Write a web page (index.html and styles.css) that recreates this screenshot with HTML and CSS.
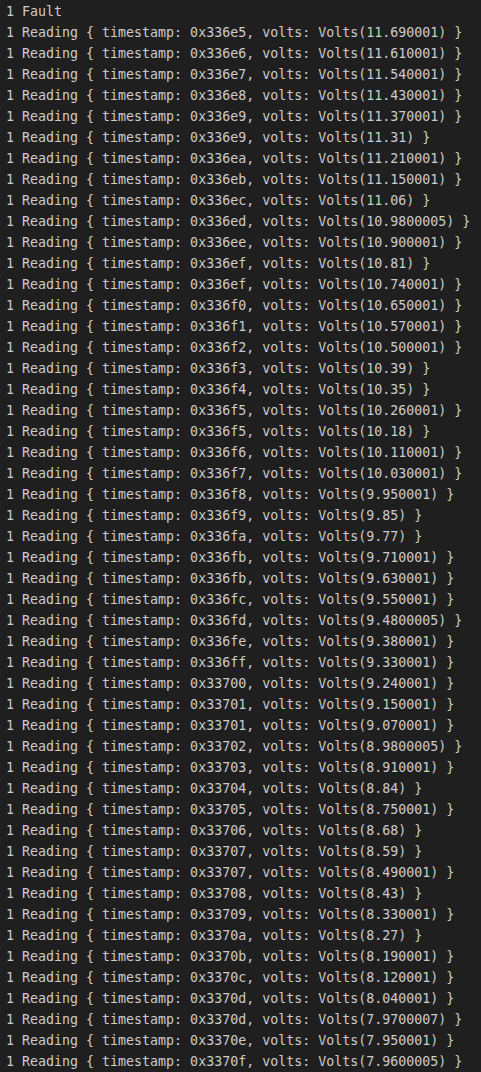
FILE: index.html
```html
<!DOCTYPE html>
<html>
<head>
<meta charset="utf-8">
<link rel="stylesheet" href="styles.css">
</head>
<body>
<div class="term">
<div class="line">1 Fault</div>
<div class="line">1 Reading { timestamp: 0x336e5, volts: Volts(11.690001) }</div>
<div class="line">1 Reading { timestamp: 0x336e6, volts: Volts(11.610001) }</div>
<div class="line">1 Reading { timestamp: 0x336e7, volts: Volts(11.540001) }</div>
<div class="line">1 Reading { timestamp: 0x336e8, volts: Volts(11.430001) }</div>
<div class="line">1 Reading { timestamp: 0x336e9, volts: Volts(11.370001) }</div>
<div class="line">1 Reading { timestamp: 0x336e9, volts: Volts(11.31) }</div>
<div class="line">1 Reading { timestamp: 0x336ea, volts: Volts(11.210001) }</div>
<div class="line">1 Reading { timestamp: 0x336eb, volts: Volts(11.150001) }</div>
<div class="line">1 Reading { timestamp: 0x336ec, volts: Volts(11.06) }</div>
<div class="line">1 Reading { timestamp: 0x336ed, volts: Volts(10.9800005) }</div>
<div class="line">1 Reading { timestamp: 0x336ee, volts: Volts(10.900001) }</div>
<div class="line">1 Reading { timestamp: 0x336ef, volts: Volts(10.81) }</div>
<div class="line">1 Reading { timestamp: 0x336ef, volts: Volts(10.740001) }</div>
<div class="line">1 Reading { timestamp: 0x336f0, volts: Volts(10.650001) }</div>
<div class="line">1 Reading { timestamp: 0x336f1, volts: Volts(10.570001) }</div>
<div class="line">1 Reading { timestamp: 0x336f2, volts: Volts(10.500001) }</div>
<div class="line">1 Reading { timestamp: 0x336f3, volts: Volts(10.39) }</div>
<div class="line">1 Reading { timestamp: 0x336f4, volts: Volts(10.35) }</div>
<div class="line">1 Reading { timestamp: 0x336f5, volts: Volts(10.260001) }</div>
<div class="line">1 Reading { timestamp: 0x336f5, volts: Volts(10.18) }</div>
<div class="line">1 Reading { timestamp: 0x336f6, volts: Volts(10.110001) }</div>
<div class="line">1 Reading { timestamp: 0x336f7, volts: Volts(10.030001) }</div>
<div class="line">1 Reading { timestamp: 0x336f8, volts: Volts(9.950001) }</div>
<div class="line">1 Reading { timestamp: 0x336f9, volts: Volts(9.85) }</div>
<div class="line">1 Reading { timestamp: 0x336fa, volts: Volts(9.77) }</div>
<div class="line">1 Reading { timestamp: 0x336fb, volts: Volts(9.710001) }</div>
<div class="line">1 Reading { timestamp: 0x336fb, volts: Volts(9.630001) }</div>
<div class="line">1 Reading { timestamp: 0x336fc, volts: Volts(9.550001) }</div>
<div class="line">1 Reading { timestamp: 0x336fd, volts: Volts(9.4800005) }</div>
<div class="line">1 Reading { timestamp: 0x336fe, volts: Volts(9.380001) }</div>
<div class="line">1 Reading { timestamp: 0x336ff, volts: Volts(9.330001) }</div>
<div class="line">1 Reading { timestamp: 0x33700, volts: Volts(9.240001) }</div>
<div class="line">1 Reading { timestamp: 0x33701, volts: Volts(9.150001) }</div>
<div class="line">1 Reading { timestamp: 0x33701, volts: Volts(9.070001) }</div>
<div class="line">1 Reading { timestamp: 0x33702, volts: Volts(8.9800005) }</div>
<div class="line">1 Reading { timestamp: 0x33703, volts: Volts(8.910001) }</div>
<div class="line">1 Reading { timestamp: 0x33704, volts: Volts(8.84) }</div>
<div class="line">1 Reading { timestamp: 0x33705, volts: Volts(8.750001) }</div>
<div class="line">1 Reading { timestamp: 0x33706, volts: Volts(8.68) }</div>
<div class="line">1 Reading { timestamp: 0x33707, volts: Volts(8.59) }</div>
<div class="line">1 Reading { timestamp: 0x33707, volts: Volts(8.490001) }</div>
<div class="line">1 Reading { timestamp: 0x33708, volts: Volts(8.43) }</div>
<div class="line">1 Reading { timestamp: 0x33709, volts: Volts(8.330001) }</div>
<div class="line">1 Reading { timestamp: 0x3370a, volts: Volts(8.27) }</div>
<div class="line">1 Reading { timestamp: 0x3370b, volts: Volts(8.190001) }</div>
<div class="line">1 Reading { timestamp: 0x3370c, volts: Volts(8.120001) }</div>
<div class="line">1 Reading { timestamp: 0x3370d, volts: Volts(8.040001) }</div>
<div class="line">1 Reading { timestamp: 0x3370d, volts: Volts(7.9700007) }</div>
<div class="line">1 Reading { timestamp: 0x3370e, volts: Volts(7.950001) }</div>
<div class="line">1 Reading { timestamp: 0x3370f, volts: Volts(7.9600005) }</div>
</div>
</body>
</html>
```

FILE: styles.css
```css
html, body {
  margin: 0;
  padding: 0;
  background: #1f1f1f;
}
.term {
  padding: 1px 0 0 6px;
  font-family: "DejaVu Sans Mono", "Liberation Mono", monospace;
  font-size: 13.3px;
  line-height: 21px;
  color: #cccccc;
}
.line {
  white-space: pre;
}
```
